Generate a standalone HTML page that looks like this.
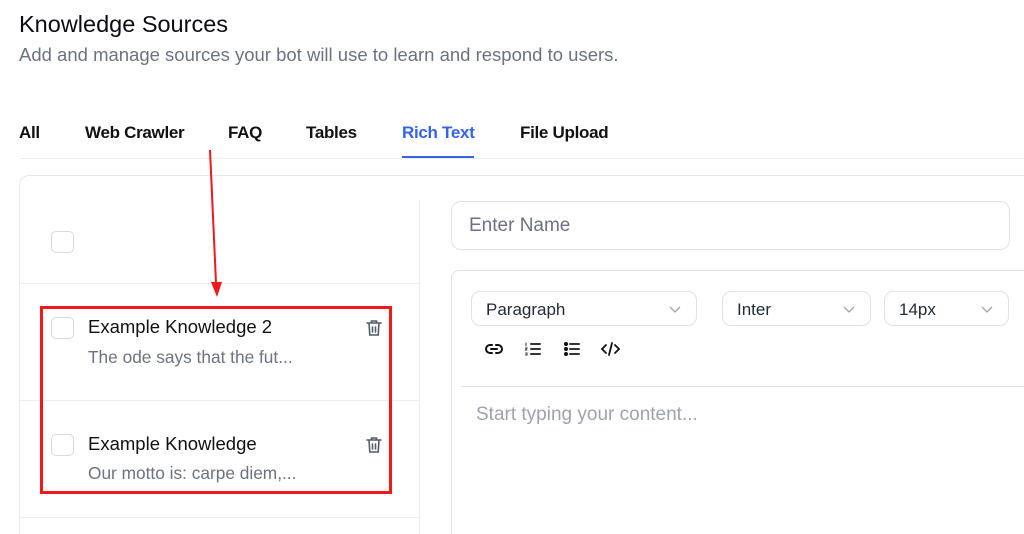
<!DOCTYPE html>
<html><head><style>
*{box-sizing:border-box;margin:0;padding:0}
html,body{width:1024px;height:534px;overflow:hidden;background:#fff}
body{font-family:"Liberation Sans",sans-serif;color:#111}
#w{position:relative;width:1024px;height:534px;overflow:hidden}
.a{position:absolute}
h1{position:absolute;left:19px;top:11px;font-size:23.5px;font-weight:400;color:#0b0b14}
.sub{left:19px;top:44px;font-size:18.5px;color:#6b7280}
.tab{top:123px;font-size:17px;font-weight:700;color:#111;letter-spacing:-0.3px}
.cb{width:23px;height:22px;border:1px solid #d6d9de;border-radius:5px;background:#fff}
.hl{height:1px;background:#eceef1}
.title{font-size:18.5px;color:#111}
.desc{font-size:17.3px;color:#6b7280}
.sel{border:1px solid #dfe2e6;border-radius:9px;height:35px;font-size:17px;color:#1f2937;padding:8px 0 0 14px}
.chev{position:absolute;right:14px;top:10px}
</style></head><body><div id="w">
<h1>Knowledge Sources</h1>
<div class="a sub">Add and manage sources your bot will use to learn and respond to users.</div>
<div class="a tab" style="left:19px">All</div>
<div class="a tab" style="left:85px">Web Crawler</div>
<div class="a tab" style="left:228px">FAQ</div>
<div class="a tab" style="left:306px">Tables</div>
<div class="a tab" style="left:402px;color:#3563e9">Rich Text</div>
<div class="a tab" style="left:520px">File Upload</div>
<div class="a hl" style="left:19px;top:158px;width:1005px"></div>
<div class="a" style="left:402px;top:156px;width:72px;height:2px;background:#3563e9"></div>

<div class="a" style="left:19px;top:175px;width:1005px;height:359px;border:1px solid #e6e8eb;border-bottom:none;border-right:none;border-radius:10px 0 0 0"></div>
<div class="a" style="left:419px;top:200px;width:1px;height:334px;background:#eceef1"></div>
<div class="a cb" style="left:51px;top:231px"></div>
<div class="a hl" style="left:20px;top:283px;width:399px"></div>
<div class="a hl" style="left:20px;top:400px;width:399px"></div>
<div class="a hl" style="left:20px;top:517px;width:399px"></div>

<div class="a cb" style="left:51px;top:317px"></div>
<div class="a title" style="left:88px;top:316px">Example Knowledge 2</div>
<div class="a desc" style="left:88px;top:347px">The ode says that the fut...</div>
<div class="a cb" style="left:51px;top:434px"></div>
<div class="a title" style="left:88px;top:433px">Example Knowledge</div>
<div class="a desc" style="left:88px;top:463px">Our motto is: carpe diem,...</div>
<svg class="a" style="left:364px;top:318px" width="20" height="20" viewBox="0 0 20 20" fill="none" stroke="#555b66" stroke-width="1.6" stroke-linecap="round"><path d="M3 5h14M7.5 5V3h5v2M5 5l.8 12h8.4L15 5M8.5 9v5M11.5 9v5"/></svg>
<svg class="a" style="left:364px;top:435px" width="20" height="20" viewBox="0 0 20 20" fill="none" stroke="#555b66" stroke-width="1.6" stroke-linecap="round"><path d="M3 5h14M7.5 5V3h5v2M5 5l.8 12h8.4L15 5M8.5 9v5M11.5 9v5"/></svg>
<div class="a" style="left:40px;top:306px;width:352px;height:188px;border:3px solid #f01818"></div>
<svg class="a" style="left:0;top:0" width="1024" height="534"><line x1="210" y1="150" x2="216" y2="283" stroke="#f01818" stroke-width="2"/><polygon points="211,282 222,282 217,297" fill="#f01818"/></svg>

<div class="a" style="left:451px;top:201px;width:559px;height:49px;border:1px solid #dfe2e6;border-radius:10px;font-size:19px;color:#6b7280;padding:13px 0 0 17px">Enter Name</div>
<div class="a" style="left:451px;top:270px;width:573px;height:264px;border:1px solid #dfe2e6;border-bottom:none;border-right:none;border-radius:8px 0 0 0"></div>
<div class="a sel" style="left:471px;top:291px;width:226px">Paragraph<svg class="chev" width="14" height="14" viewBox="0 0 14 14"><path d="M2 5l5 5 5-5" fill="none" stroke="#9ca3af" stroke-width="1.3"/></svg></div>
<div class="a sel" style="left:722px;top:291px;width:149px">Inter<svg class="chev" width="14" height="14" viewBox="0 0 14 14"><path d="M2 5l5 5 5-5" fill="none" stroke="#9ca3af" stroke-width="1.3"/></svg></div>
<div class="a sel" style="left:884px;top:291px;width:125px">14px<svg class="chev" width="14" height="14" viewBox="0 0 14 14"><path d="M2 5l5 5 5-5" fill="none" stroke="#9ca3af" stroke-width="1.3"/></svg></div>
<svg class="a" style="left:484px;top:339px" width="150" height="20" viewBox="0 0 150 20" fill="none" stroke="#111" stroke-width="2" stroke-linecap="round">
<path d="M8 6H6a4 4 0 000 8h2M12 6h2a4 4 0 010 8h-2M7 10h6"/>
<path d="M47 5h9M47 10h9M47 15h9" stroke="#333"/><path d="M42 4v3M41.5 9h1.5l-1.5 2h1.5M41.5 14h1.5v2h-1.5" stroke-width="1" stroke="#333"/>
<circle cx="82" cy="5" r="1" fill="#111"/><circle cx="82" cy="10" r="1" fill="#111"/><circle cx="82" cy="15" r="1" fill="#111"/><path d="M86 5h9M86 10h9M86 15h9" stroke="#333"/>
<path d="M122 6l-4 4 4 4M131 6l4 4-4 4M128 4l-3 12" stroke-width="1.8"/></svg>
<div class="a hl" style="left:461px;top:386px;width:563px;background:#dfe2e6"></div>
<div class="a" style="left:476px;top:404px;font-size:19px;color:#9ca3af">Start typing your content...</div>
</div></body></html>
